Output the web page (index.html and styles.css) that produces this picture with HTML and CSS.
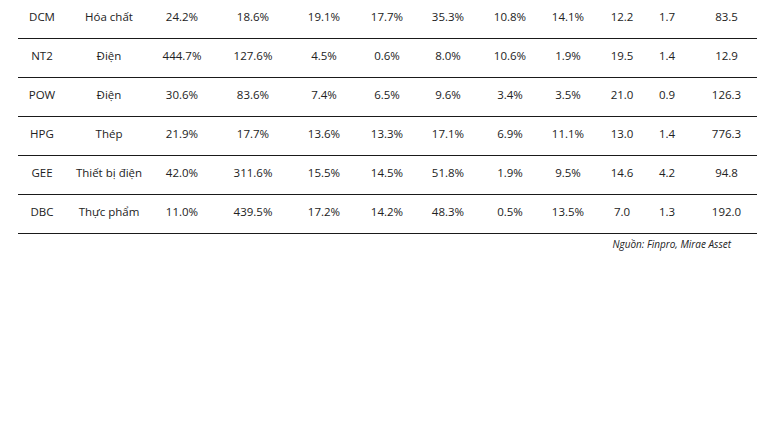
FILE: index.html
```html
<!DOCTYPE html>
<html lang="vi">
<head>
<meta charset="utf-8">
<link rel="stylesheet" href="styles.css">
</head>
<body>
<div class="wrap">
<table class="tbl">
<colgroup>
<col class="c1"><col class="c2"><col class="c3"><col class="c4"><col class="c5"><col class="c6"><col class="c7"><col class="c8"><col class="c9"><col class="c10"><col class="c11"><col class="c12">
</colgroup>
<tbody>
<tr><td>DCM</td><td>Hóa chất</td><td>24.2%</td><td>18.6%</td><td>19.1%</td><td>17.7%</td><td>35.3%</td><td>10.8%</td><td>14.1%</td><td>12.2</td><td>1.7</td><td class="last">83.5</td></tr>
<tr><td>NT2</td><td>Điện</td><td>444.7%</td><td>127.6%</td><td>4.5%</td><td>0.6%</td><td>8.0%</td><td>10.6%</td><td>1.9%</td><td>19.5</td><td>1.4</td><td class="last">12.9</td></tr>
<tr><td>POW</td><td>Điện</td><td>30.6%</td><td>83.6%</td><td>7.4%</td><td>6.5%</td><td>9.6%</td><td>3.4%</td><td>3.5%</td><td>21.0</td><td>0.9</td><td class="last">126.3</td></tr>
<tr><td>HPG</td><td>Thép</td><td>21.9%</td><td>17.7%</td><td>13.6%</td><td>13.3%</td><td>17.1%</td><td>6.9%</td><td>11.1%</td><td>13.0</td><td>1.4</td><td class="last">776.3</td></tr>
<tr><td>GEE</td><td>Thiết bị điện</td><td>42.0%</td><td>311.6%</td><td>15.5%</td><td>14.5%</td><td>51.8%</td><td>1.9%</td><td>9.5%</td><td>14.6</td><td>4.2</td><td class="last">94.8</td></tr>
<tr><td>DBC</td><td>Thực phẩm</td><td>11.0%</td><td>439.5%</td><td>17.2%</td><td>14.2%</td><td>48.3%</td><td>0.5%</td><td>13.5%</td><td>7.0</td><td>1.3</td><td class="last">192.0</td></tr>
</tbody>
</table>
<p class="source">Nguồn: Finpro, Mirae Asset</p>
</div>
</body>
</html>
```
FILE: styles.css
```css
html, body {
  margin: 0;
  padding: 0;
  background: #ffffff;
}
body {
  font-family: "Open Sans", "Liberation Sans", sans-serif;
  color: #222222;
}
.wrap {
  width: 739px;
  margin-left: 18px;
  margin-top: -1px;
}
.tbl {
  border-collapse: collapse;
  table-layout: fixed;
  width: 739px;
  font-size: 11.5px;
}
.c1 { width: 48px; }
.c2 { width: 86px; }
.c3 { width: 60px; }
.c4 { width: 82px; }
.c5 { width: 60px; }
.c6 { width: 66px; }
.c7 { width: 56px; }
.c8 { width: 68px; }
.c9 { width: 48px; }
.c10 { width: 60px; }
.c11 { width: 30px; }
.c12 { width: 75px; }
.tbl td {
  height: 39px;
  padding: 0 0 4px 0;
  text-align: center;
  vertical-align: middle;
  border-bottom: 1px solid #1a1a1a;
  white-space: nowrap;
  box-sizing: border-box;
}
.tbl td.last {
  padding-left: 14px;
}
.source {
  margin: 3px 26px 0 0;
  text-align: right;
  font-size: 10px;
  font-style: italic;
  color: #222222;
}
```
